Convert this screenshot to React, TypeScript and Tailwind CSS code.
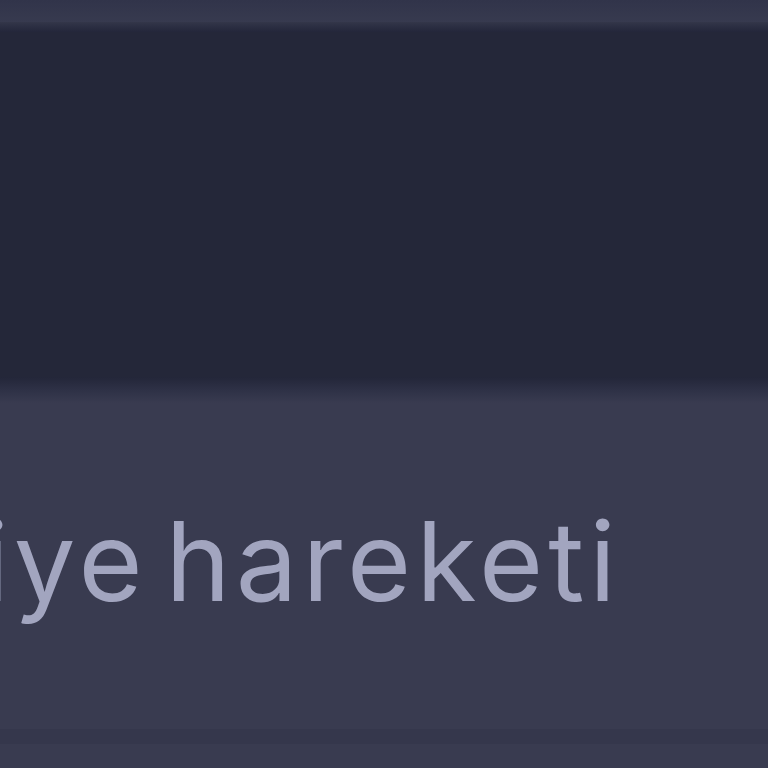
export default function App() {
  return (
    <div className="w-[768px] h-[768px] overflow-hidden flex flex-col bg-[#393b50]" style={{ fontFamily: 'Inter, "Noto Sans", sans-serif' }}>
      <div className="h-[22px] bg-gradient-to-b from-[#31344a] to-[#373a4f]" />
      <div className="h-[10px] bg-gradient-to-b from-[#333649] to-[#23263a]" />
      <div className="h-[345px] bg-[#242739]" />
      <div className="h-[26px] bg-gradient-to-b from-[#232639] via-[#2e3146] to-[#393b50]" />
      <div className="flex-1 flex flex-col">
        <div className="h-[88px]" />
        <div className="overflow-hidden h-[140px] whitespace-nowrap">
          <span className="block ml-[-246px] text-[110px] leading-[140px] font-normal text-[#a2a5bf] tracking-[5px] [word-spacing:-18px]">
            Hediye hareketi
          </span>
        </div>
        <div className="h-[98px]" />
        <div className="h-[15px] bg-[#35374c]" />
        <div className="flex-1" />
      </div>
    </div>
  );
}
